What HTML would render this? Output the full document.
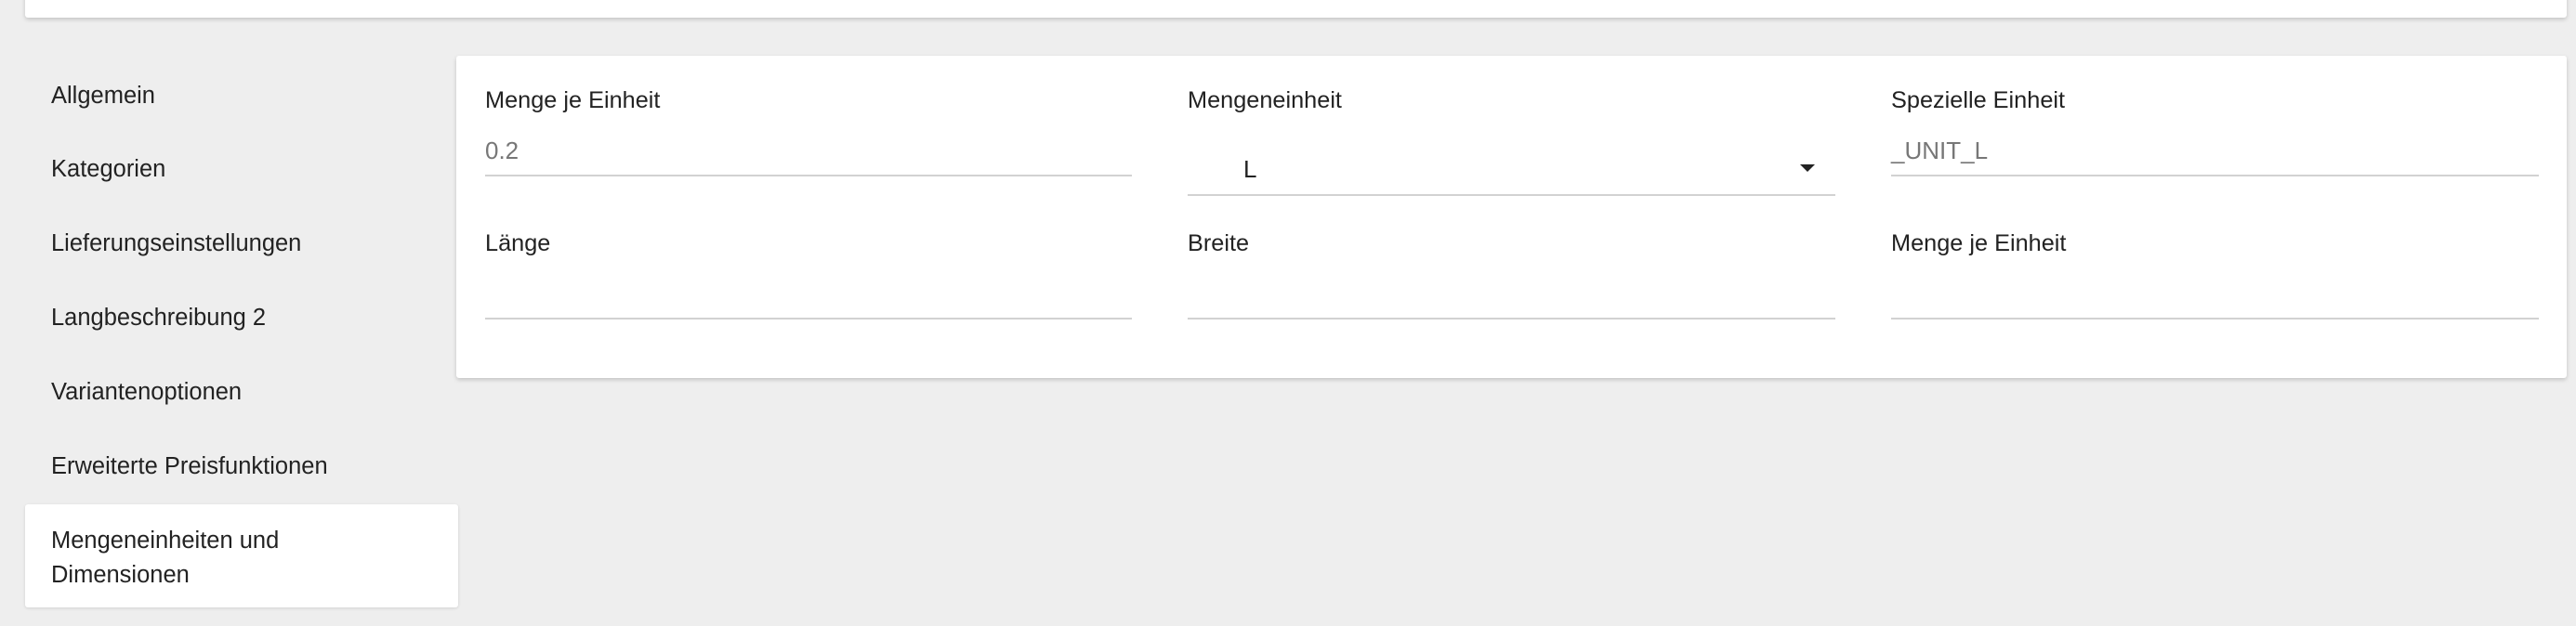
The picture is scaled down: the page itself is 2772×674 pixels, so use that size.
<!DOCTYPE html>
<html><head><meta charset="utf-8"><style>
*{margin:0;padding:0;box-sizing:border-box}
body{width:2772px;height:674px;background:#eeeeee;font-family:"Liberation Sans",Arial,sans-serif;position:relative;overflow:hidden;color:#222}
.abs{position:absolute}
.card{background:#fff;box-shadow:0 2px 5px rgba(0,0,0,0.18);border-radius:3px}
.nav{position:absolute;left:55px;font-size:25.5px;color:#222;line-height:36px}
.lbl{position:absolute;font-size:25.3px;color:#222;line-height:30px}
.val{position:absolute;font-size:26px;color:#777;line-height:30px}
.line{position:absolute;height:2px;background:#d2d2d2}
</style></head><body>
<div class="abs card" style="left:27px;top:-10px;width:2735px;height:29px"></div>
<div class="abs card" style="left:491px;top:60px;width:2271px;height:347px"></div>
<div class="nav" style="top:85px">Allgemein</div>
<div class="nav" style="top:164px">Kategorien</div>
<div class="nav" style="top:244px">Lieferungseinstellungen</div>
<div class="nav" style="top:324px">Langbeschreibung 2</div>
<div class="nav" style="top:404px">Variantenoptionen</div>
<div class="nav" style="top:484px">Erweiterte Preisfunktionen</div>
<div class="abs card" style="left:27px;top:543px;width:466px;height:111px;box-shadow:0 1px 3px rgba(0,0,0,0.12)"></div>
<div class="nav" style="top:564px;line-height:37px">Mengeneinheiten und<br>Dimensionen</div>

<div class="lbl" style="left:522px;top:93px">Menge je Einheit</div>
<div class="val" style="left:522px;top:147px">0.2</div>
<div class="line" style="left:522px;top:188px;width:696px"></div>

<div class="lbl" style="left:1278px;top:93px">Mengeneinheit</div>
<div class="lbl" style="left:1338px;top:167px;font-size:26px">L</div>
<div class="abs" style="left:1937px;top:177px;width:0;height:0;border-left:8px solid transparent;border-right:8px solid transparent;border-top:8px solid #222"></div>
<div class="line" style="left:1278px;top:209px;width:697px"></div>

<div class="lbl" style="left:2035px;top:93px">Spezielle Einheit</div>
<div class="val" style="left:2035px;top:147px">_UNIT_L</div>
<div class="line" style="left:2035px;top:188px;width:697px"></div>

<div class="lbl" style="left:522px;top:247px">Länge</div>
<div class="line" style="left:522px;top:342px;width:696px"></div>
<div class="lbl" style="left:1278px;top:247px">Breite</div>
<div class="line" style="left:1278px;top:342px;width:697px"></div>
<div class="lbl" style="left:2035px;top:247px">Menge je Einheit</div>
<div class="line" style="left:2035px;top:342px;width:697px"></div>
</body></html>
